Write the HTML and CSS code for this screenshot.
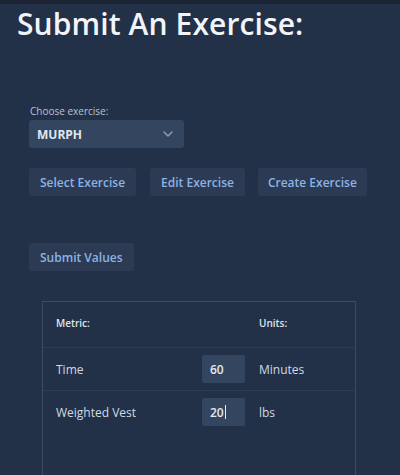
FILE: index.html
```html
<!DOCTYPE html>
<html>
<head>
<meta charset="utf-8">
<link rel="stylesheet" href="styles.css">
</head>
<body>
<div class="topbar"></div>
<main class="page">
  <h1 class="title">Submit An Exercise:</h1>
  <label class="label">Choose exercise:</label>
  <div class="select">
    <span>MURPH</span>
    <svg class="chev" width="10" height="6" viewBox="0 0 10 6"><path d="M1 1l4 4 4-4" fill="none" stroke="#8a9bb3" stroke-width="1.5" stroke-linecap="round" stroke-linejoin="round"/></svg>
  </div>
  <div class="btnrow">
    <button class="btn">Select Exercise</button>
    <button class="btn">Edit Exercise</button>
    <button class="btn">Create Exercise</button>
  </div>
  <div class="submitrow">
    <button class="btn">Submit Values</button>
  </div>
  <div class="table">
    <div class="row head">
      <div class="c1">Metric:</div>
      <div class="c2"></div>
      <div class="c3">Units:</div>
    </div>
    <div class="row">
      <div class="c1">Time</div>
      <div class="c2"><div class="input">60</div></div>
      <div class="c3">Minutes</div>
    </div>
    <div class="row last">
      <div class="c1">Weighted Vest</div>
      <div class="c2"><div class="input">20<span class="caret"></span></div></div>
      <div class="c3">lbs</div>
    </div>
  </div>
</main>
</body>
</html>
```
FILE: styles.css
```css
html, body {
  margin: 0;
  background: #223148;
  height: 100%;
  overflow: hidden;
}
body {
  font-family: "Open Sans", "Noto Sans", sans-serif;
  color: #e6ebf2;
}
.topbar {
  height: 4px;
  background: #1b2536;
}
.page {
  padding: 0 0 0 29px;
}
.title {
  margin: 0 0 0 -12px;
  font-size: 30px;
  font-weight: 600;
  color: #f1f4f8;
  line-height: 40px;
  letter-spacing: 0.1px;
}
.label {
  display: block;
  margin-top: 60px;
  font-size: 10px;
  color: #b9c3d1;
  line-height: 14px;
  padding-left: 1px;
}
.select {
  margin-top: 2px;
  width: 155px;
  height: 28px;
  box-sizing: border-box;
  background: #34465f;
  border-radius: 3px;
  display: flex;
  align-items: center;
  justify-content: space-between;
  padding: 0 11px 0 8px;
  font-size: 12px;
  font-weight: 700;
  color: #e1e7ef;
}
.btnrow {
  display: flex;
  gap: 14px;
  margin-top: 20px;
}
.btn {
  height: 28px;
  padding: 0 11px;
  border: none;
  border-radius: 3px;
  background: #2c3b53;
  color: #8db2e4;
  font-family: inherit;
  font-size: 12px;
  font-weight: 600;
}
.btnrow .btn:nth-child(3) { padding: 0 10px; margin-left: -1px; }
.submitrow {
  margin-top: 47px;
}
.table {
  margin: 30px 0 0 13px;
  width: 314px;
  height: 180px;
  box-sizing: border-box;
  border: 1px solid #3a4b63;
  border-bottom: none;
}
.row {
  display: flex;
  align-items: center;
  height: 42px;
  border-top: 1px solid #2d3d54;
  font-size: 12px;
  color: #d2d9e3;
}
.row.head {
  border-top: none;
  height: 45px;
  padding-bottom: 3px;
  box-sizing: border-box;
  font-size: 10px;
  font-weight: 600;
  color: #dfe5ed;
}
.c1 {
  width: 146px;
  padding-left: 13px;
}
.c2 {
  width: 57px;
}
.c3 {
  flex: 1;
}
.input {
  width: 43px;
  height: 28px;
  box-sizing: border-box;
  background: #34465f;
  border-radius: 2px;
  display: flex;
  align-items: center;
  padding-left: 8px;
  font-size: 12px;
  font-weight: 600;
  color: #e4e9f0;
}
.caret {
  display: inline-block;
  width: 1px;
  height: 14px;
  background: #e4e9f0;
  margin-left: 1px;
}
```
